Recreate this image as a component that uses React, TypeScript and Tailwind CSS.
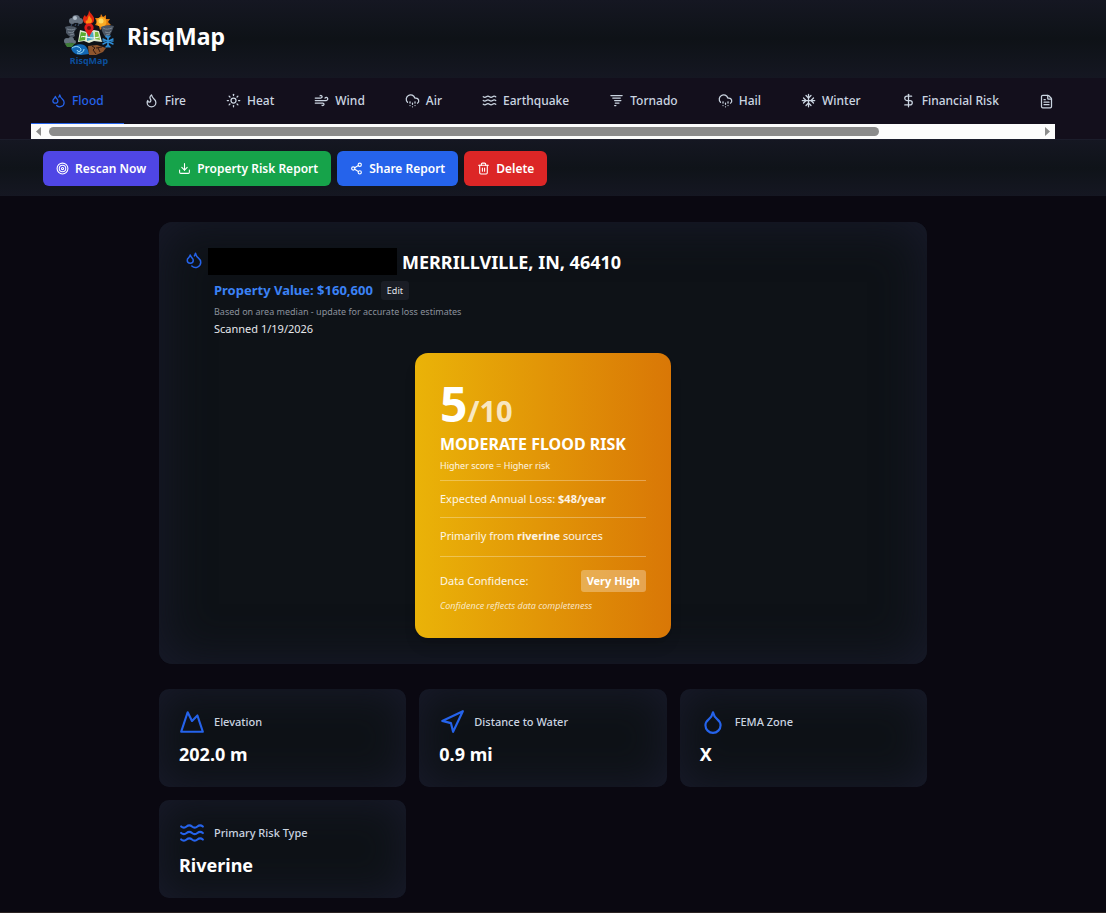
import { useState } from 'react';
import type { ComponentType } from 'react';
import {
  CloudHail,
  DollarSign,
  Download,
  Droplet,
  Droplets,
  FileText,
  Flame,
  Mountain,
  Navigation,
  Share2,
  Sun,
  Target,
  Tornado,
  Trash2,
  Waves,
  Wind,
} from 'lucide-react';

type Icon = ComponentType<{ size?: number; className?: string }>;

// Four-way flake, heavier than the six-armed one in lucide
function Snowflake({ size = 24, className }: { size?: number; className?: string }) {
  return (
    <svg
      width={size}
      height={size}
      viewBox="0 0 24 24"
      fill="none"
      stroke="currentColor"
      strokeWidth="2"
      strokeLinecap="round"
      strokeLinejoin="round"
      className={className}
      aria-hidden="true"
    >
      <path d="M2 12h20M12 2v20" />
      <path d="m20 16-4-4 4-4" />
      <path d="m4 8 4 4-4 4" />
      <path d="m16 4-4 4-4-4" />
      <path d="m8 20 4-4 4 4" />
    </svg>
  );
}

const TABS: { label: string; icon: Icon }[] = [
  { label: 'Flood', icon: Droplets },
  { label: 'Fire', icon: Flame },
  { label: 'Heat', icon: Sun },
  { label: 'Wind', icon: Wind },
  { label: 'Air', icon: CloudHail },
  { label: 'Earthquake', icon: Waves },
  { label: 'Tornado', icon: Tornado },
  { label: 'Hail', icon: CloudHail },
  { label: 'Winter', icon: Snowflake },
  { label: 'Financial Risk', icon: DollarSign },
];

const ACTIONS: { label: string; icon: Icon; color: string }[] = [
  { label: 'Rescan Now', icon: Target, color: 'bg-[#4f46e5]' },
  { label: 'Property Risk Report', icon: Download, color: 'bg-[#16a34a]' },
  { label: 'Share Report', icon: Share2, color: 'bg-[#2563eb]' },
  { label: 'Delete', icon: Trash2, color: 'bg-[#dc2626]' },
];

const STATS: { label: string; value: string; icon: Icon }[] = [
  { label: 'Elevation', value: '202.0 m', icon: Mountain },
  { label: 'Distance to Water', value: '0.9 mi', icon: Navigation },
  { label: 'FEMA Zone', value: 'X', icon: Droplet },
  { label: 'Primary Risk Type', value: 'Riverine', icon: Waves },
];

// ── Logo ──────────────────────────────────────────────────
function Logo() {
  return (
    <svg viewBox="0 0 52 58" className="w-[52px] h-[58px] shrink-0" aria-hidden="true">
      {/* storm cloud */}
      <g fill="#66717f">
        <circle cx="9" cy="11" r="3" />
        <circle cx="13" cy="9" r="4" />
        <circle cx="17" cy="11" r="3" />
      </g>
      <circle cx="12" cy="8" r="2" fill="#b3bfcb" />
      <path d="M9 14l-1 2M13 14l-1 2M16 14l-1 2" stroke="#3b506c" />
      {/* sun */}
      <path d="M38 4l2 3 3-2v4l4 0-2 3 3 3-4 1 0 3-4-2-3 3-1-4-4-1 2-3-2-4 5 0z" fill="#e37b0d" />
      <circle cx="38.500" cy="12" r="5" fill="#fbab24" />
      <circle cx="38" cy="11" r="2.500" fill="#ffda62" />
      {/* flame */}
      <path d="M26 0c1 4 6 6 5 10 0 3-3 4-6 4s-5-2-5-5c0-2 1-3 2-4l1 2c2-2 3-4 3-7z" fill="#e3260f" />
      <path d="M26 5c1 3 3 3 3 6 0 2-2 3-4 3s-3-2-2-4l1 1z" fill="#ff8a14" />
      {/* twisters */}
      <path d="M2 17c4-2 9-1 12 1l-3 4 1 4-3 2-3-2-3-3 0-3z" fill="#4c5663" />
      <path d="M4 19c3 1 6 1 8 0M5 22c3 1 5 1 6-1M7 25l4-1" fill="none" stroke="#7c8793" />
      <path d="M38 17c4-2 9-2 13-1l-2 5-2 4-4 3-2-3-2-4z" fill="#4c5663" />
      <path d="M40 18c3 2 6 1 9 0M42 22c3 1 5 1 6-1M43 25l4-1" fill="none" stroke="#7c8793" />
      {/* folded map */}
      <path d="M17 20l7 2 7-2 5 1 3 11-8-1-5 2-5-2-6 1z" fill="#dfe9d2" />
      <path d="M18 22l5 1-1 7-6 1z" fill="#5aab30" />
      <path d="M24 24l6-2 1 7-7 2z" fill="#4aa8c8" />
      <path d="M32 22l3 0 2 8-5-1z" fill="#7fbd3c" />
      <path d="M18 27c4-2 9 3 18 0" fill="none" stroke="#fff" />
      <path d="M26 27l-4-7a4.600 4.600 0 1 1 8 0z" fill="#e21b1b" />
      <circle cx="26" cy="18" r="2" fill="#661111" />
      {/* hail */}
      <g fill="#66727e">
        <circle cx="4" cy="31" r="3" />
        <circle cx="8" cy="30" r="3" />
        <circle cx="11" cy="32" r="2" />
      </g>
      <path d="M2 34c3-2 7 0 10-1l-3 4-5 0z" fill="#3f7c38" />
      {/* snow */}
      <g stroke="#2f8ed6" strokeWidth="1.500" strokeLinecap="round" fill="none">
        <path d="M45 26v11M40 29l10 5M50 29l-10 5" />
        <path d="M43 26l2 2 2-2M43 37l2-2 2 2M40 31l2 0M48 31l2 0" />
      </g>
      {/* flood wave */}
      <path d="M8 38c3-3 9-5 13-3 3 2 4 4 5 9l-8 1c-6 0-9-3-10-7z" fill="#1268b5" />
      <path d="M9 38c4-3 9-1 9 2 0 2-4 2-4 0M14 43c4 1 7-1 7-4" fill="none" stroke="#9fdcfa" />
      {/* cracked ground */}
      <path d="M25 36l9-1 9 3-3 4-7 3-7 0z" fill="#8d552d" />
      <path d="M29 36l3 2-2 2 3 4M33 38l6-1M35 38l2 4" fill="none" stroke="#301a12" />
      <text x="26" y="54" textAnchor="middle" fill="#0b4e9b" className="font-['Noto_Sans'] text-[9px] font-bold">
        RisqMap
      </text>
    </svg>
  );
}

// ── Tab bar with its scroll track ─────────────────────────
function HazardTabs() {
  const [active, setActive] = useState('Flood');

  return (
    <nav className="bg-[#130f1c] pl-[31px] pr-[51px]" aria-label="Hazards">
      <div className="flex h-[46px] overflow-hidden">
        {TABS.map(({ label, icon: TabIcon }) => (
          <button
            key={label}
            onClick={() => setActive(label)}
            className={`flex shrink-0 items-center gap-1.5 border-b px-5 text-[12px] font-medium ${
              active === label ? 'border-[#2563eb] text-[#2563eb]' : 'border-transparent text-[#cbd5e1]'
            }`}
          >
            <TabIcon size={15} />
            {label}
          </button>
        ))}
        <button aria-label="Report" className="flex shrink-0 items-center pl-5 text-[#cbd5e1]">
          <FileText size={15} />
        </button>
      </div>
      <div className="flex h-[15px] items-center justify-between bg-[#fcfcfc] px-[5px]">
        <svg viewBox="0 0 5 9" className="h-[9px] w-[5px]" fill="#8b8b8b">
          <path d="M5 0v9L0 4.500z" />
        </svg>
        <div className="mx-2 flex-1">
          <div className="h-[9px] w-[84%] rounded-full bg-[#8b8b8b]" />
        </div>
        <svg viewBox="0 0 5 9" className="h-[9px] w-[5px]" fill="#8b8b8b">
          <path d="M0 0v9l5-4.500z" />
        </svg>
      </div>
    </nav>
  );
}

// ── Score card ────────────────────────────────────────────
function ScoreCard() {
  return (
    <div className="mx-auto mt-[15px] w-64 rounded-[13px] bg-linear-to-r/srgb from-[#eab308] to-[#d97706] px-[25px] pb-6 pt-7 text-[11px] leading-4 text-white shadow-lg">
      <p className="text-[48px] font-bold leading-[46px]">
        5<span className="text-[29px] text-white/75">/10</span>
      </p>
      <h2 className="text-[16px] font-bold leading-5">MODERATE FLOOD RISK</h2>
      <p className="mt-1 text-[9px] text-white/90">Higher score = Higher risk</p>
      <p className="mt-1.5 border-t border-white/30 py-2.5 text-white/90">
        Expected Annual Loss: <strong>$48/year</strong>
      </p>
      <p className="border-t border-white/30 pb-3 pt-2.5 text-white/90">
        Primarily from <strong>riverine</strong> sources
      </p>
      <div className="border-t border-white/30 pt-[13px]">
        <div className="flex items-center justify-between">
          <span className="text-white/90">Data Confidence:</span>
          <span className="rounded-[3px] bg-white/30 px-1.5 py-[3px] font-bold">Very High</span>
        </div>
        <p className="mt-1.5 text-[9px] italic text-white/75">Confidence reflects data completeness</p>
      </div>
    </div>
  );
}

export default function App() {
  return (
    <div className="min-h-screen bg-[#0a0811] font-['Noto_Sans',sans-serif] text-white">
      <header className="flex h-[78px] items-center gap-3 bg-linear-to-b/srgb from-[#151722] via-[#0e1217] to-[#151722] px-[63px]">
        <Logo />
        <h1 className="pb-1.5 text-[23px] font-bold">RisqMap</h1>
      </header>

      <HazardTabs />

      <div className="flex gap-1.5 border-t border-[#1b1d2b] bg-linear-to-b/srgb from-[#151722] via-[#0f1319] to-[#151722] px-[43px] pb-2.5 pt-[11px]">
        {ACTIONS.map(({ label, icon: ActionIcon, color }) => (
          <button
            key={label}
            className={`flex h-[35px] items-center gap-1.5 rounded-md px-[13px] text-[12px] font-semibold ${color}`}
          >
            <ActionIcon size={13} />
            {label}
          </button>
        ))}
      </div>

      <main className="pr-5">
        <div className="mx-auto max-w-3xl pt-[26px]">
          {/* Property summary */}
          <section className="rounded-[13px] bg-[#0e1217] p-[26px] shadow-[inset_0_0_50px_#191b2c]">
            <div className="flex items-start gap-[5px]">
              <Droplets size={18} className="mt-[3px] text-[#2563eb]" />
              <span className="h-[27px] w-[189px] bg-black" />
              <h2 className="text-[18px] font-bold leading-[29px]">MERRILLVILLE, IN, 46410</h2>
            </div>
            <div className="pl-[29px]">
              <div className="mt-1 flex items-center gap-2">
                <p className="text-[13px] font-bold leading-[19px] text-[#3b82f6]">Property Value: $160,600</p>
                <button className="h-[19px] rounded-[3px] bg-[#1a1d25] px-1.5 text-[9px] text-[#e5e7eb]">Edit</button>
              </div>
              <p className="mt-1 text-[9px] leading-4 text-[#8b919c]">
                Based on area median - update for accurate loss estimates
              </p>
              <p className="text-[11px] leading-[18px] text-[#e5e7eb]">Scanned 1/19/2026</p>
            </div>
            <ScoreCard />
          </section>

          {/* Location facts */}
          <section className="mt-[25px] grid grid-cols-3 gap-[13px]">
            {STATS.map(({ label, value, icon: StatIcon }) => (
              <div key={label} className="h-[98px] rounded-[10px] bg-[#0e1217] p-5 shadow-[inset_0_0_40px_#191b2c]">
                <div className="flex items-center gap-[9px] text-[11px] font-medium text-[#cbd5e1]">
                  <StatIcon size={26} className="text-[#2563eb]" />
                  {label}
                </div>
                <p className="mt-1.5 text-[18px] font-bold leading-[27px]">{value}</p>
              </div>
            ))}
          </section>
        </div>
      </main>

      <footer className="mt-3.5 border-t border-[#2b2323]" />
    </div>
  );
}
